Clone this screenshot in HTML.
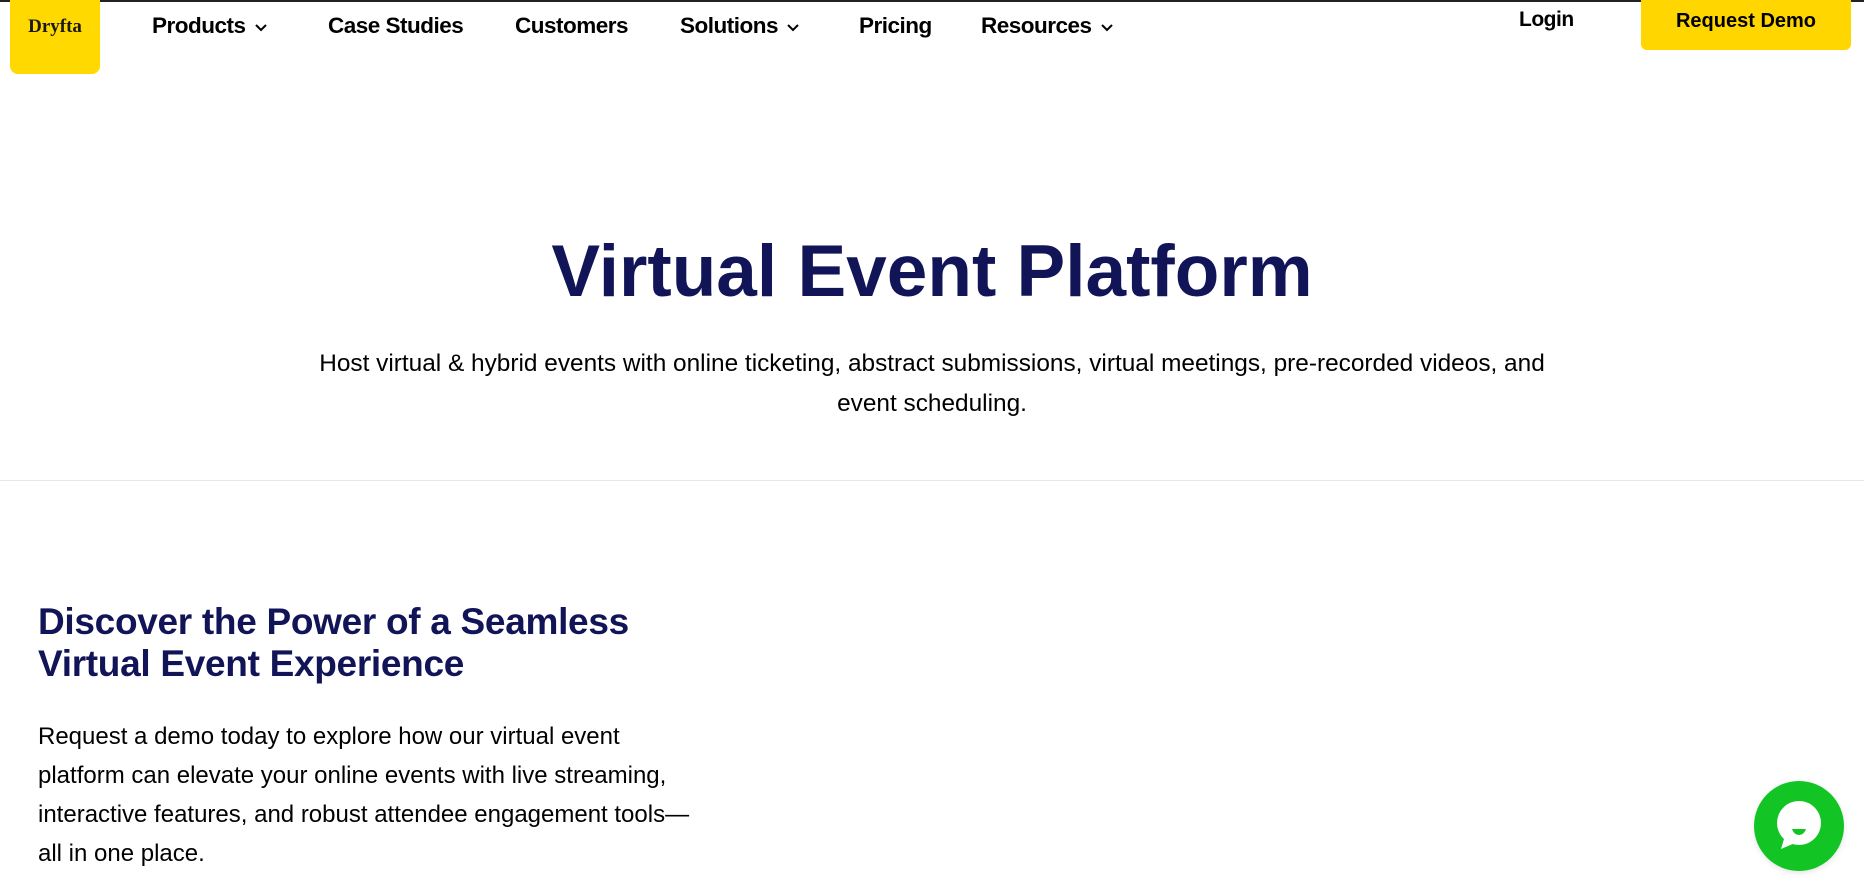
<!DOCTYPE html>
<html><head><meta charset="utf-8"><style>
*{margin:0;padding:0;box-sizing:border-box}
body{width:1864px;height:891px;overflow:hidden;background:#fff;font-family:"Liberation Sans",sans-serif;color:#000;position:relative}
.top{position:absolute;left:0;top:0;width:1864px;height:2px;background:#222}
.logo{position:absolute;left:10px;top:0;width:90px;height:74px;background:#ffd900;border-radius:0 0 8px 8px;font-family:"Liberation Serif",serif;font-weight:bold;font-size:19px;text-align:center;padding-top:16px;color:#1a1a1a}
.nav{position:absolute;top:13px;font-weight:bold;font-size:22.5px;letter-spacing:-0.5px;white-space:nowrap}
.nav svg{margin-left:8px;vertical-align:middle}
.btn{position:absolute;left:1641px;top:0;width:210px;height:50px;background:#ffd600;border-radius:0 0 6px 6px;font-weight:bold;font-size:20px;text-align:center;line-height:42px}
h1{position:absolute;left:0;width:1864px;top:230px;text-align:center;font-size:73px;color:#121458}
.sub{position:absolute;left:312px;width:1240px;top:344px;text-align:center;font-size:24.4px;line-height:40px}
.hr{position:absolute;left:0;top:480px;width:1864px;height:1px;background:#e8e8e8}
h2{position:absolute;left:38px;top:601px;font-size:37px;line-height:42px;color:#121458;letter-spacing:-0.3px}
.p{position:absolute;left:38px;top:717px;width:760px;font-size:24px;line-height:39px;white-space:nowrap}
.chat{position:absolute;left:1754px;top:781px;width:90px;height:90px;border-radius:50%;background:#13c524;box-shadow:0 2px 6px rgba(0,0,0,.1)}
</style></head><body>
<div class="top"></div>
<div class="logo">Dryfta</div>
<div class="nav" style="left:152px">Products<svg width="14" height="9" viewBox="0 0 14 9"><path d="M2 2l5 5 5-5" stroke="#000" stroke-width="2" fill="none"/></svg></div>
<div class="nav" style="left:328px">Case Studies</div>
<div class="nav" style="left:515px">Customers</div>
<div class="nav" style="left:680px">Solutions<svg width="14" height="9" viewBox="0 0 14 9"><path d="M2 2l5 5 5-5" stroke="#000" stroke-width="2" fill="none"/></svg></div>
<div class="nav" style="left:859px">Pricing</div>
<div class="nav" style="left:981px">Resources<svg width="14" height="9" viewBox="0 0 14 9"><path d="M2 2l5 5 5-5" stroke="#000" stroke-width="2" fill="none"/></svg></div>
<div class="nav" style="left:1519px;top:8px;font-size:21px">Login</div>
<div class="btn">Request Demo</div>
<h1>Virtual Event Platform</h1>
<div class="sub">Host virtual &amp; hybrid events with online ticketing, abstract submissions, virtual meetings, pre-recorded videos, and event scheduling.</div>
<div class="hr"></div>
<h2>Discover the Power of a Seamless<br>Virtual Event Experience</h2>
<div class="p">Request a demo today to explore how our virtual event<br>platform can elevate your online events with live streaming,<br>interactive features, and robust attendee engagement tools—<br>all in one place.</div>
<div class="chat"><svg width="90" height="90" viewBox="0 0 90 90"><circle cx="45" cy="42" r="22" fill="#fff"/><path d="M30 58l-3 10 14-6z" fill="#fff"/><path d="M38 48h14q-2 6-7 6t-7-6z" fill="#13c524"/></svg></div>
</body></html>
